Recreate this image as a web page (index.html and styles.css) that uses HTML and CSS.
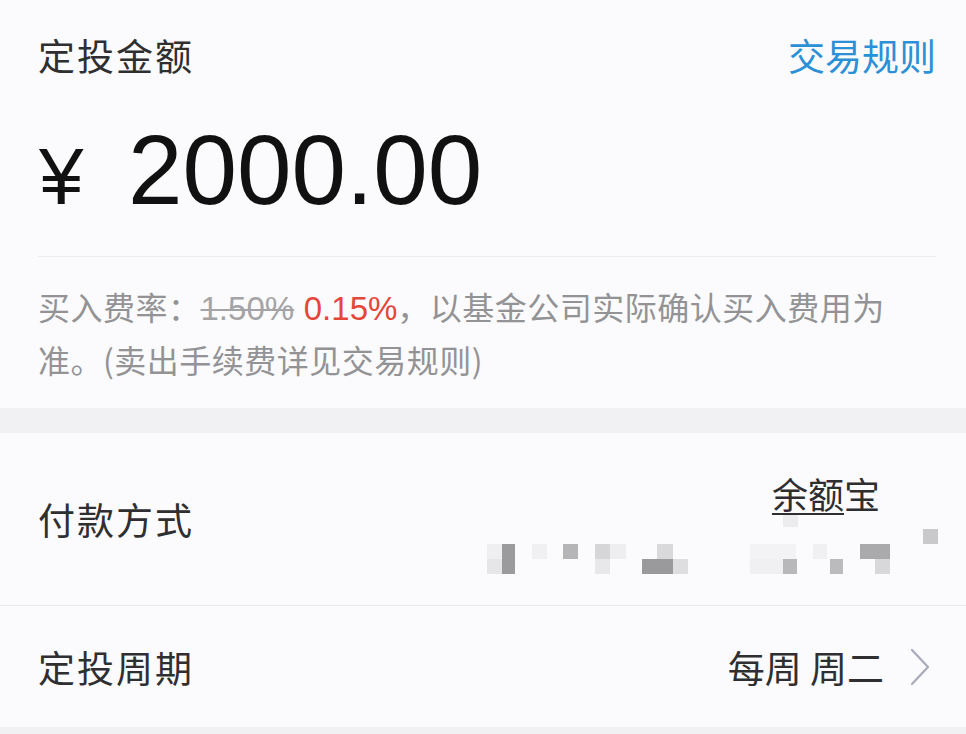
FILE: index.html
```html
<!DOCTYPE html>
<html lang="zh-CN">
<head>
<meta charset="utf-8">
<title>定投金额</title>
<link rel="stylesheet" href="styles.css">
</head>
<body>
<div class="page">
  <section class="card amount-card">
    <div class="header">
      <span class="title">定投金额</span>
      <a class="rules">交易规则</a>
    </div>
    <div class="amount"><span class="yen">¥</span><span class="num">2000.00</span></div>
    <div class="divider"></div>
    <p class="fee">买入费率：<span class="old lat">1.50%</span> <span class="new lat">0.15%</span>，以基金公司实际确认买入费用为准。(卖出手续费详见交易规则)</p>
  </section>
  <div class="band"></div>
  <section class="card list">
    <div class="row pay">
      <span class="label">付款方式</span>
      <div class="pay-value">
        <span class="method"><span class="ul">余额</span>宝</span>
        <svg class="blur" width="460" height="62" viewBox="0 0 460 62">
          <rect x="305" y="0" width="15" height="12" fill="#ececef"/>
          <rect x="445" y="14" width="15" height="15" fill="#c9c9cb"/>
          <rect x="9" y="29" width="15" height="15" fill="#efeff1"/>
          <rect x="24" y="29" width="13" height="30" fill="#9b9b9d"/>
          <rect x="54" y="29" width="15" height="15" fill="#f0f0f3"/>
          <rect x="85" y="29" width="15" height="15" fill="#b5b5b7"/>
          <rect x="117" y="29" width="15" height="15" fill="#d6d6d8"/>
          <rect x="132" y="29" width="16" height="15" fill="#eeeef0"/>
          <rect x="179" y="29" width="16" height="15" fill="#d9d9db"/>
          <rect x="272" y="29" width="46" height="15" fill="#f3f3f5"/>
          <rect x="335" y="29" width="14" height="15" fill="#f0f0f3"/>
          <rect x="382" y="29" width="30" height="15" fill="#aaaaac"/>
          <rect x="9" y="44" width="15" height="15" fill="#e6e6e8"/>
          <rect x="117" y="44" width="15" height="15" fill="#e8e8ea"/>
          <rect x="164" y="44" width="31" height="15" fill="#9a9a9c"/>
          <rect x="195" y="44" width="15" height="15" fill="#dedee0"/>
          <rect x="272" y="44" width="33" height="15" fill="#f0f0f2"/>
          <rect x="305" y="44" width="14" height="15" fill="#b8b8ba"/>
          <rect x="352" y="44" width="13" height="15" fill="#bbbbbd"/>
          <rect x="397" y="44" width="15" height="15" fill="#d8d8da"/>
        </svg>
      </div>
    </div>
    <div class="row-divider"></div>
    <div class="row period">
      <span class="label">定投周期</span>
      <div class="period-value">
        <span class="value">每周 周二</span>
        <svg class="chevron" width="20" height="40" viewBox="0 0 20 40"><path d="M2 3 L18 20 L2 37" fill="none" stroke="#a7aabb" stroke-width="2.2" stroke-linejoin="round" stroke-linecap="round"/></svg>
      </div>
    </div>
  </section>
  <div class="band bottom"></div>
</div>
</body>
</html>
```

FILE: styles.css
```css
html, body {
  margin: 0;
  padding: 0;
  background: #fafafc;
  overflow: hidden;
}
body {
  width: 966px;
  height: 734px;
  font-family: "Noto Sans CJK SC", "Noto Sans", sans-serif;
  color: #333;
}
.page {
  display: flex;
  flex-direction: column;
}
.card {
  background: #fbfbfd;
}
.amount-card {
  padding: 34px 30px 0 38px;
  height: 408px;
  box-sizing: border-box;
}
.header {
  display: flex;
  justify-content: space-between;
  align-items: center;
  height: 43px;
}
.title {
  font-size: 37px;
  line-height: 43px;
  letter-spacing: 2px;
  color: #2f2f31;
}
.rules {
  font-size: 37px;
  line-height: 43px;
  color: #2b90d6;
}
.amount {
  margin-top: 44px;
  height: 98px;
  line-height: 98px;
  font-family: "Liberation Sans", Arial, sans-serif;
  font-size: 98px;
  color: #111;
  display: flex;
  align-items: baseline;
}
.yen {
  font-size: 80px;
  margin-left: 1px;
  width: 89px;
}
.divider {
  margin-top: 37px;
  height: 1px;
  background: #ececef;
}
.fee {
  margin: 24px 0 0 0;
  width: 870px;
  font-size: 32px;
  letter-spacing: 0.5px;
  line-height: 50px;
  color: #939396;
}
.fee .lat {
  font-family: "Liberation Sans", Arial, sans-serif;
  font-size: 33px;
  letter-spacing: 0;
}
.fee .old {
  text-decoration: line-through;
  text-decoration-thickness: 2px;
  color: #a4a4a7;
}
.fee .new {
  color: #e5463b;
  margin-left: 2px;
}
.band {
  height: 25px;
  background: #f1f1f3;
}
.band.bottom {
  height: 10px;
}
.list {
  display: flex;
  flex-direction: column;
}
.row {
  display: flex;
  align-items: center;
  justify-content: space-between;
  padding: 0 28px 0 38px;
}
.row.pay {
  height: 172px;
}
.row.period {
  height: 121px;
}
.label {
  font-size: 37px;
  line-height: 44px;
  letter-spacing: 2px;
  color: #2f2f31;
}
.pay-value {
  display: flex;
  flex-direction: column;
  align-items: flex-end;
  margin-top: 10px;
}
.method {
  font-size: 36px;
  line-height: 44px;
  margin-right: 58px;
  color: #2e2e30;
}
.method .ul {
  text-decoration: underline;
  text-underline-offset: 4px;
  text-decoration-thickness: 2px;
}
.blur {
  display: block;
}
.row-divider {
  height: 1px;
  background: #e9e9ec;
}
.period-value {
  display: flex;
  align-items: center;
  gap: 26px;
  margin-right: 8px;
}
.value {
  font-size: 37px;
  line-height: 44px;
  color: #2f2f31;
}
.chevron {
  display: block;
}
```
